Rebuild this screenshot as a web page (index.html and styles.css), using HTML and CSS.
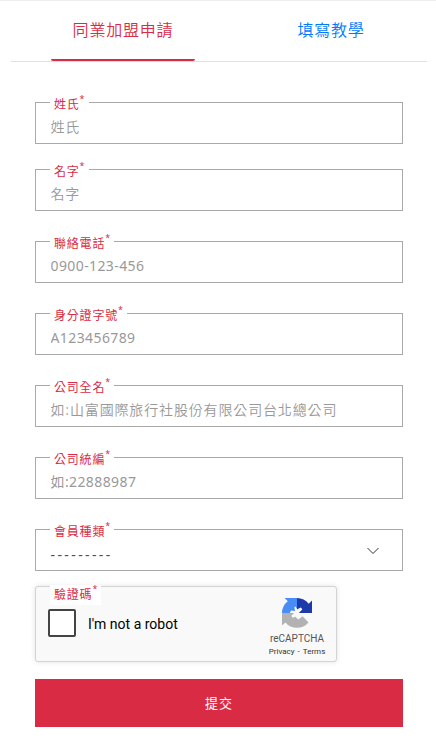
FILE: index.html
```html
<!DOCTYPE html>
<html lang="zh-Hant">
<head>
<meta charset="utf-8">
<title>同業加盟申請</title>
<link rel="stylesheet" href="styles.css">
</head>
<body>
<nav class="tabs">
  <a class="tab active">同業加盟申請</a>
  <a class="tab">填寫教學</a>
</nav>
<form class="form">
  <div class="field first"><label>姓氏<span class="star">*</span></label><input placeholder="姓氏"></div>
  <div class="field"><label>名字<span class="star">*</span></label><input placeholder="名字"></div>
  <div class="field"><label>聯絡電話<span class="star">*</span></label><input class="latin" placeholder="0900-123-456"></div>
  <div class="field"><label>身分證字號<span class="star">*</span></label><input class="latin" placeholder="A123456789"></div>
  <div class="field"><label>公司全名<span class="star">*</span></label><input placeholder="如:山富國際旅行社股份有限公司台北總公司"></div>
  <div class="field"><label>公司統編<span class="star">*</span></label><input class="latin" placeholder="如:22888987"></div>
  <div class="field kind"><label>會員種類<span class="star">*</span></label>
    <div class="select"><span>---------</span>
      <svg width="12" height="8" viewBox="0 0 12 8"><path d="M.5 1 6 6.5 11.5 1" fill="none" stroke="#333" stroke-width="1"/></svg>
    </div>
  </div>
  <div class="captcha">
    <label>驗證碼<span class="star">*</span></label>
    <span class="check"></span>
    <span class="robot">I'm not a robot</span>
    <div class="brand">
      <svg width="30" height="30" viewBox="0 0 30 30">
        <path fill="#1c3aa9" d="M15 0A15 15 0 0 1 26.7 5.8L30 2.6V15H16.8L20.3 11.5A6 6 0 0 0 18.6 9.6L15 11.5Z"/>
        <path fill="#4a8cf6" d="M2.6 0H15V10.8L13.5 8.5A7 7 0 0 0 12.4 9L13 13 9 12.5A7 7 0 0 0 8 15H0A15 15 0 0 1 5.8 3.3Z"/>
        <path fill="#b2b2b2" d="M0 15H12.2L9.4 17.8A7 7 0 0 0 10.6 19.8L13.6 18.8A6 6 0 0 0 16.4 21.4L20.6 18.2 26.5 24.4A15 15 0 0 1 3.4 24.4L0 27.6Z"/>
      </svg>
      <span class="name">reCAPTCHA</span>
      <span class="terms">Privacy<i>-</i>Terms</span>
    </div>
  </div>
  <button type="button" class="submit">提交</button>
</form>
</body>
</html>
```
FILE: styles.css
```css
* { box-sizing: border-box; }
body {
  margin: 0;
  height: 744px;
  border-top: 1px solid #ededed;
  background: #fff;
  font-family: "Noto Sans", "Noto Sans CJK TC", sans-serif;
  letter-spacing: .8px;
  overflow: hidden;
}
.tabs {
  display: flex;
  justify-content: space-between;
  margin: 0 9px 0 11px;
  padding: 0 24px 0 40px;
  height: 61px;
  border-bottom: 1px solid #dee2e6;
}
.tab {
  width: 144px;
  height: 60px;
  text-align: center;
  font: 350 16px/56px "Noto Sans CJK TC", sans-serif;
  color: #007bff;
}
.active {
  color: #da2b44;
  border-bottom: 2px solid #da2b44;
  border-radius: 2px;
}
.form { padding: 40px 33px 0 35px; }
.field {
  position: relative;
  height: 42px;
  margin-bottom: 30px;
}
.field.first { margin-bottom: 25px; }
.field.kind { margin-bottom: 15px; }
label {
  position: absolute;
  left: 15px;
  top: -8px;
  height: 19px;
  padding: 0 4px;
  background: #fff;
  color: #da2b44;
  font: 12px/20px "Noto Sans CJK TC", sans-serif;
  white-space: nowrap;
}
.star {
  position: relative;
  top: -7px;
  font: 9px/1 "Noto Sans", sans-serif;
  letter-spacing: 0;
}
input, .select {
  width: 100%;
  height: 42px;
  padding: 6px 15px 0 14.5px;
  border: 1px solid #a9a9a9;
  border-radius: 0;
  background: #fff;
  font: 350 14px "Noto Sans CJK TC", sans-serif;
  letter-spacing: .85px;
}
input::placeholder { color: #999; opacity: 1; }
.latin {
  font-family: "Noto Sans", "Noto Sans CJK TC", sans-serif;
  font-weight: 400;
  letter-spacing: .4px;
}
.select {
  display: flex;
  justify-content: space-between;
  align-items: center;
  padding: 8px 23px 0 14.5px;
  font: 14px "Noto Sans", sans-serif;
  letter-spacing: 2.4px;
  color: #495057;
}
.select svg { margin-top: -6px; }
.captcha {
  position: relative;
  display: flex;
  width: 302px;
  height: 76px;
  padding-left: 12px;
  border: 1px solid #d3d3d3;
  border-radius: 3px;
  background: #f9f9f9;
  box-shadow: 0 0 4px 1px rgba(0, 0, 0, .08);
  font-family: Roboto, sans-serif;
  letter-spacing: 0;
}
.captcha label { left: 14px; top: -2px; height: 20px; letter-spacing: .8px; line-height: 17px; }
.check {
  width: 28px;
  height: 28px;
  margin-top: 22px;
  border: 2px solid #444;
  border-radius: 2px;
  background: #fff;
}
.robot {
  margin: 29px 0 0 12px;
  font-size: 14px;
  line-height: 17px;
  color: #000;
}
.brand {
  display: flex;
  flex-direction: column;
  align-items: center;
  width: 60px;
  margin: 11px 9px 0 auto;
  color: #555;
}
.name { margin-top: 5px; font-size: 10px; line-height: 12px; }
.terms { margin-top: 2px; font-size: 8px; line-height: 10px; white-space: nowrap; color: #333; }
.terms i { margin: 0 3px; font-style: normal; }
.submit {
  display: block;
  width: 100%;
  height: 48px;
  margin-top: 17px;
  padding: 0 0 2px 0;
  border: 0;
  background: #da2b44;
  color: #fff;
  font: 13px "Noto Sans CJK TC", sans-serif;
  letter-spacing: 1px;
}
```
